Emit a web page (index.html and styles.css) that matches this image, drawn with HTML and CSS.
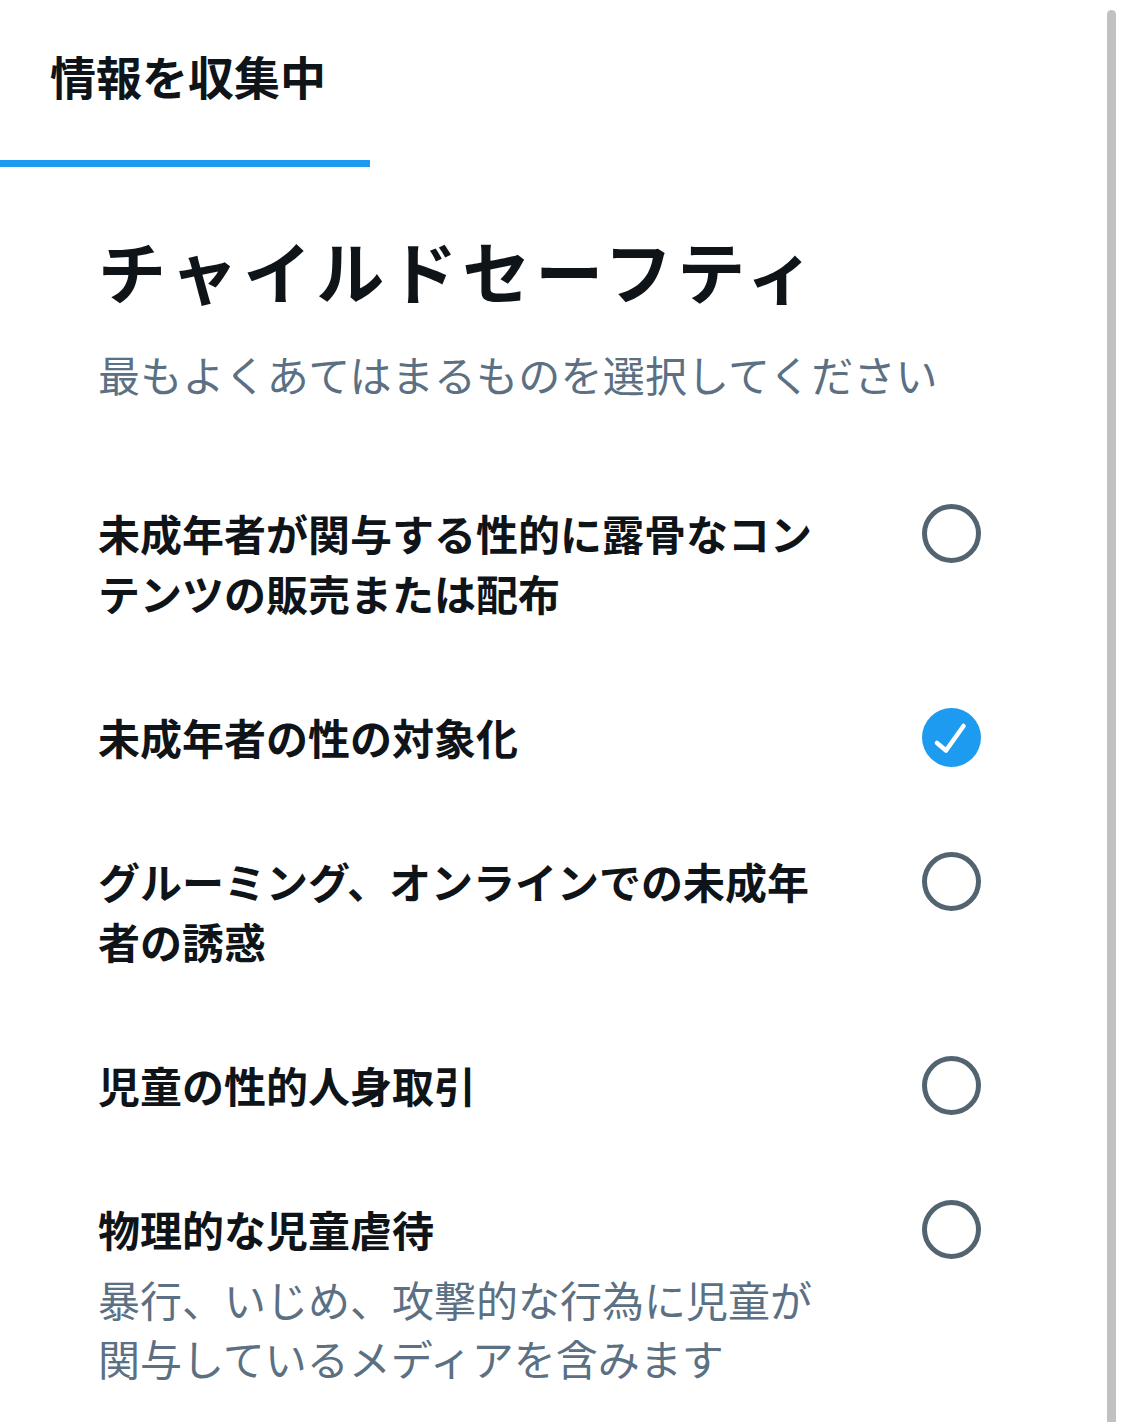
FILE: index.html
```html
<!DOCTYPE html>
<html lang="ja">
<head>
    <meta charset="UTF-8">
    <meta name="viewport" content="width=device-width, initial-scale=1.0">
    <title>チャイルドセーフティ</title>
    <link rel="stylesheet" href="styles.css">
</head>
<body>
    <div class="frame">
        <div class="main">
            <nav class="tabs">
                <div class="tab active">情報を収集中</div>
            </nav>
            <section class="report">
                <h1 class="title">チャイルドセーフティ</h1>
                <p class="subtitle">最もよくあてはまるものを選択してください</p>
                <ul class="options">
                    <li class="option">
                        <div class="option-text">
                            <div class="option-label">未成年者が関与する性的に露骨なコンテンツの販売または配布</div>
                        </div>
                        <span class="radio"></span>
                    </li>
                    <li class="option">
                        <div class="option-text">
                            <div class="option-label">未成年者の性の対象化</div>
                        </div>
                        <span class="radio checked">
                            <svg viewBox="0 0 59 59" width="59" height="59"><path d="M15 35 L24 42.5 L41.5 18" fill="none" stroke="#fff" stroke-width="4.5" stroke-linecap="round" stroke-linejoin="round"/></svg>
                        </span>
                    </li>
                    <li class="option">
                        <div class="option-text">
                            <div class="option-label">グルーミング、オンラインでの未成年者の誘惑</div>
                        </div>
                        <span class="radio"></span>
                    </li>
                    <li class="option">
                        <div class="option-text">
                            <div class="option-label">児童の性的人身取引</div>
                        </div>
                        <span class="radio"></span>
                    </li>
                    <li class="option">
                        <div class="option-text">
                            <div class="option-label">物理的な児童虐待</div>
                            <div class="option-desc">暴行、いじめ、攻撃的な行為に児童が関与しているメディアを含みます</div>
                        </div>
                        <span class="radio"></span>
                    </li>
                </ul>
            </section>
        </div>
        <div class="scrollbar"></div>
    </div>
</body>
</html>
```

FILE: styles.css
```css
:root {
    --text: #0f1419; --muted: #5b7083; --blue: #1d9bf0; --radio: #536471;
    --scroll: #c1c1c1;
}
body {
    margin: 0; background: #fff; color: var(--text);
    font-family: "Noto Sans CJK JP", "Noto Sans", sans-serif;
}
.frame { display: flex; min-height: 1422px; }
.main { flex: 1; }
.scrollbar {
    width: 9px; margin: 10px 9px 0 2px; background: var(--scroll);
    border-radius: 5px 5px 0 0;
}
.tabs { display: flex; }
.tab {
    width: 370px; height: 167px; box-sizing: border-box; padding: 45px 0 0 50px;
    font-size: 46px; font-weight: 700; line-height: 60px;
}
.tab.active { border-bottom: 7px solid var(--blue); }
.report { padding: 0 0 0 98px; }
.title {
    margin: 58px 0 0; font-size: 68px; font-weight: 700; line-height: 90px;
    letter-spacing: 5px;
}
.subtitle {
    margin: 29px 0 0; font-size: 42px; line-height: 60px; color: var(--muted);
    letter-spacing: 0.2px;
}
.options { list-style: none; margin: 57px 0 0; padding: 0; width: 883px; }
.option {
    display: flex; justify-content: space-between; align-items: flex-start;
    padding: 42px 0;
}
.option-text { width: 740px; }
.option-label { font-size: 42px; font-weight: 700; line-height: 60px; }
.option-desc {
    margin-top: 10px; font-size: 42px; line-height: 59px; color: var(--muted);
}
.radio {
    width: 59px; height: 59px; box-sizing: border-box; flex-shrink: 0;
    border: 5px solid var(--radio); border-radius: 50%; margin-top: 1px;
}
.radio.checked { background: var(--blue); border: none; }
.radio svg { display: block; }
```
